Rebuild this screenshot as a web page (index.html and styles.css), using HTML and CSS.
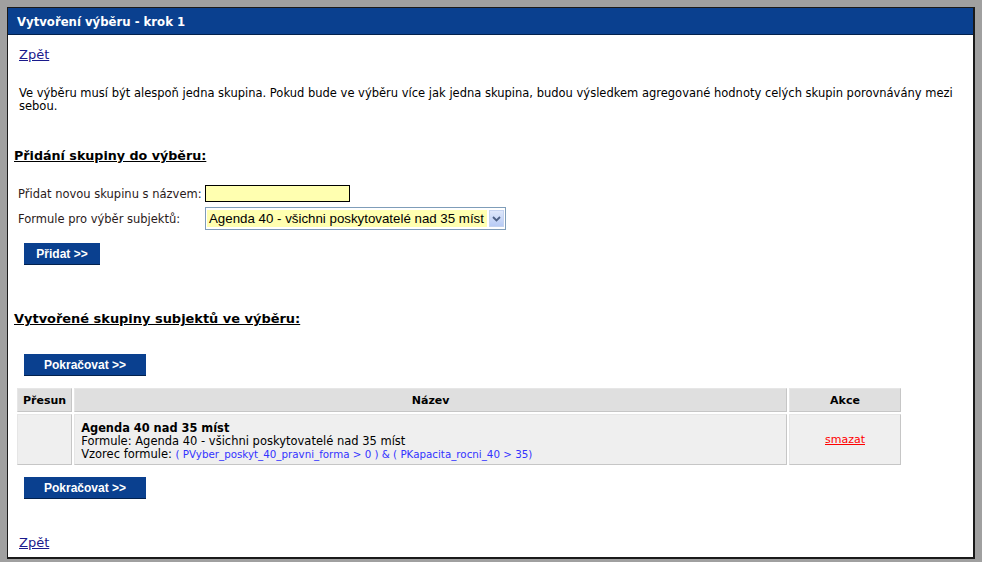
FILE: index.html
```html
<!DOCTYPE html>
<html lang="cs">
<head>
<meta charset="utf-8">
<title>Vytvoření výběru - krok 1</title>
<link rel="stylesheet" href="styles.css">
</head>
<body>
<div class="panel">
  <div class="panel-head">Vytvoření výběru - krok 1</div>
  <div class="panel-body">
    <a class="back" href="#">Zpět</a>
    <p class="intro">Ve výběru musí být alespoň jedna skupina. Pokud bude ve výběru více jak jedna skupina, budou výsledkem agregované hodnoty celých skupin porovnávány mezi sebou.</p>

    <h2 class="section">Přidání skupiny do výběru:</h2>
    <div class="form">
      <div class="form-row">
        <label class="lbl">Přidat novou skupinu s názvem:</label>
        <input class="txt" type="text">
      </div>
      <div class="form-row">
        <label class="lbl">Formule pro výběr subjektů:</label>
        <div class="sel">
          <span class="sel-text">Agenda 40 - všichni poskytovatelé nad 35 míst</span>
          <span class="sel-btn"><svg width="9" height="6" viewBox="0 0 9 6"><path d="M1 1 L4.5 4.5 L8 1" fill="none" stroke="#4d6185" stroke-width="1.8"/></svg></span>
        </div>
      </div>
    </div>
    <button class="btn btn-add">Přidat &gt;&gt;</button>

    <h2 class="section section2">Vytvořené skupiny subjektů ve výběru:</h2>
    <button class="btn btn-next first">Pokračovat &gt;&gt;</button>

    <table class="grid">
      <thead>
        <tr><th class="c1">Přesun</th><th class="c2">Název</th><th class="c3">Akce</th></tr>
      </thead>
      <tbody>
        <tr>
          <td class="c1"></td>
          <td class="c2">
            <div class="g-name">Agenda 40 nad 35 míst</div>
            <div>Formule: Agenda 40 - všichni poskytovatelé nad 35 míst</div>
            <div>Vzorec formule: <span class="formula">( PVyber_poskyt_40_pravni_forma &gt; 0 ) &amp; ( PKapacita_rocni_40 &gt; 35)</span></div>
          </td>
          <td class="c3"><a class="del" href="#">smazat</a></td>
        </tr>
      </tbody>
    </table>

    <button class="btn btn-next last">Pokračovat &gt;&gt;</button>
    <a class="back back2" href="#">Zpět</a>
  </div>
</div>
</body>
</html>
```
FILE: styles.css
```css
html, body {
  margin: 0;
  padding: 0;
  background: #a0a0a0;
  height: 100%;
  overflow: hidden;
}
body {
  padding: 7px 0 0 7px;
  font-family: "DejaVu Sans", Verdana, sans-serif;
  font-size: 11.5px;
  color: #000;
}
.panel {
  width: 965px;
  height: 549px;
  background: #fff;
  border: 1px solid #1a1a1a;
  border-right-width: 2px;
  border-bottom-width: 2px;
  display: flex;
  flex-direction: column;
}
.panel-head {
  height: 26px;
  background: #0a408f;
  border-bottom: 1px solid #02214d;
  color: #fff;
  font-weight: bold;
  font-size: 11.7px;
  line-height: 28px;
  padding-left: 9px;
}
.panel-body {
  padding: 0 6px;
  display: flex;
  flex-direction: column;
  align-items: flex-start;
}
.back {
  margin: 12px 0 0 5px;
  font-size: 13px;
  line-height: 16px;
  color: #1a1a8c;
}
.intro {
  margin: 24px 0 0 5px;
  line-height: 13px;
  width: 942px;
}
.section {
  margin: 35px 0 0 0;
  font-size: 12.7px;
  line-height: 16px;
  font-weight: bold;
  text-decoration: underline;
}
.section2 {
  margin-top: 46px;
  font-size: 12.95px;
}
.form {
  margin: 21px 0 0 4px;
  display: grid;
  grid-template-columns: 187px auto;
  row-gap: 5px;
  font-size: 11.5px;
}
.form-row {
  display: contents;
}
.lbl {
  align-self: center;
  color: #2a1a1a;
}
.txt {
  width: 143px;
  height: 15px;
  margin: 0;
  padding: 0;
  border: 1px solid #000;
  background: #ffffb0;
}
.sel {
  width: 297px;
  height: 21px;
  border: 1px solid #7f9db9;
  background: #fff;
  display: flex;
  align-items: center;
  padding: 0 1px;
  box-sizing: content-box;
}
.sel-text {
  flex: 1;
  background: #ffffb0;
  font-family: "Liberation Sans", Arial, sans-serif;
  font-size: 13.3px;
  line-height: 17px;
  height: 17px;
  padding-left: 2px;
  white-space: nowrap;
  overflow: hidden;
}
.sel-btn {
  width: 15px;
  height: 17px;
  margin-left: 2px;
  background: linear-gradient(#dfe8fb, #b8cbf5);
  border: 1px solid #c5d3f0;
  box-sizing: border-box;
  display: flex;
  align-items: center;
  justify-content: center;
}
.btn {
  background: #0a408f;
  color: #fff;
  border: 0;
  border-bottom: 1px solid #02214d;
  font-family: "Liberation Sans", Arial, sans-serif;
  font-weight: bold;
  font-size: 12px;
  height: 22px;
  padding: 0;
  margin-left: 10px;
}
.btn-add {
  width: 76px;
  margin-top: 13px;
}
.btn-next {
  width: 122px;
}
.btn-next.first {
  margin-top: 27px;
}
.grid {
  margin: 10px 0 0 1px;
  border-collapse: separate;
  border-spacing: 2px;
  width: 888px;
  font-size: 11px;
}
.grid th, .grid td {
  border: 1px solid #c6c6c6;
  border-top-color: #e6e6e6;
  border-left-color: #e6e6e6;
  padding: 0 5px;
}
.grid th {
  background: #dfdfdf;
  height: 22px;
  font-weight: bold;
}
.grid td {
  background: #efefef;
  height: 49px;
  line-height: 13px;
  font-size: 11.5px;
}
.grid td.c2 {
  vertical-align: top;
  padding: 7px 5px 0 6px;
  height: 42px;
}
.grid .c1 { width: 40px; }
.grid .c3 { width: 100px; text-align: center; }
.g-name {
  font-weight: bold;
  font-size: 11.4px;
}
.formula {
  color: #3333ff;
  font-size: 10.3px;
}
.del {
  color: #ff0000;
  font-size: 11px;
}
.btn-next.last {
  margin-top: 10px;
}
.back2 {
  margin-top: 36px;
}
```
